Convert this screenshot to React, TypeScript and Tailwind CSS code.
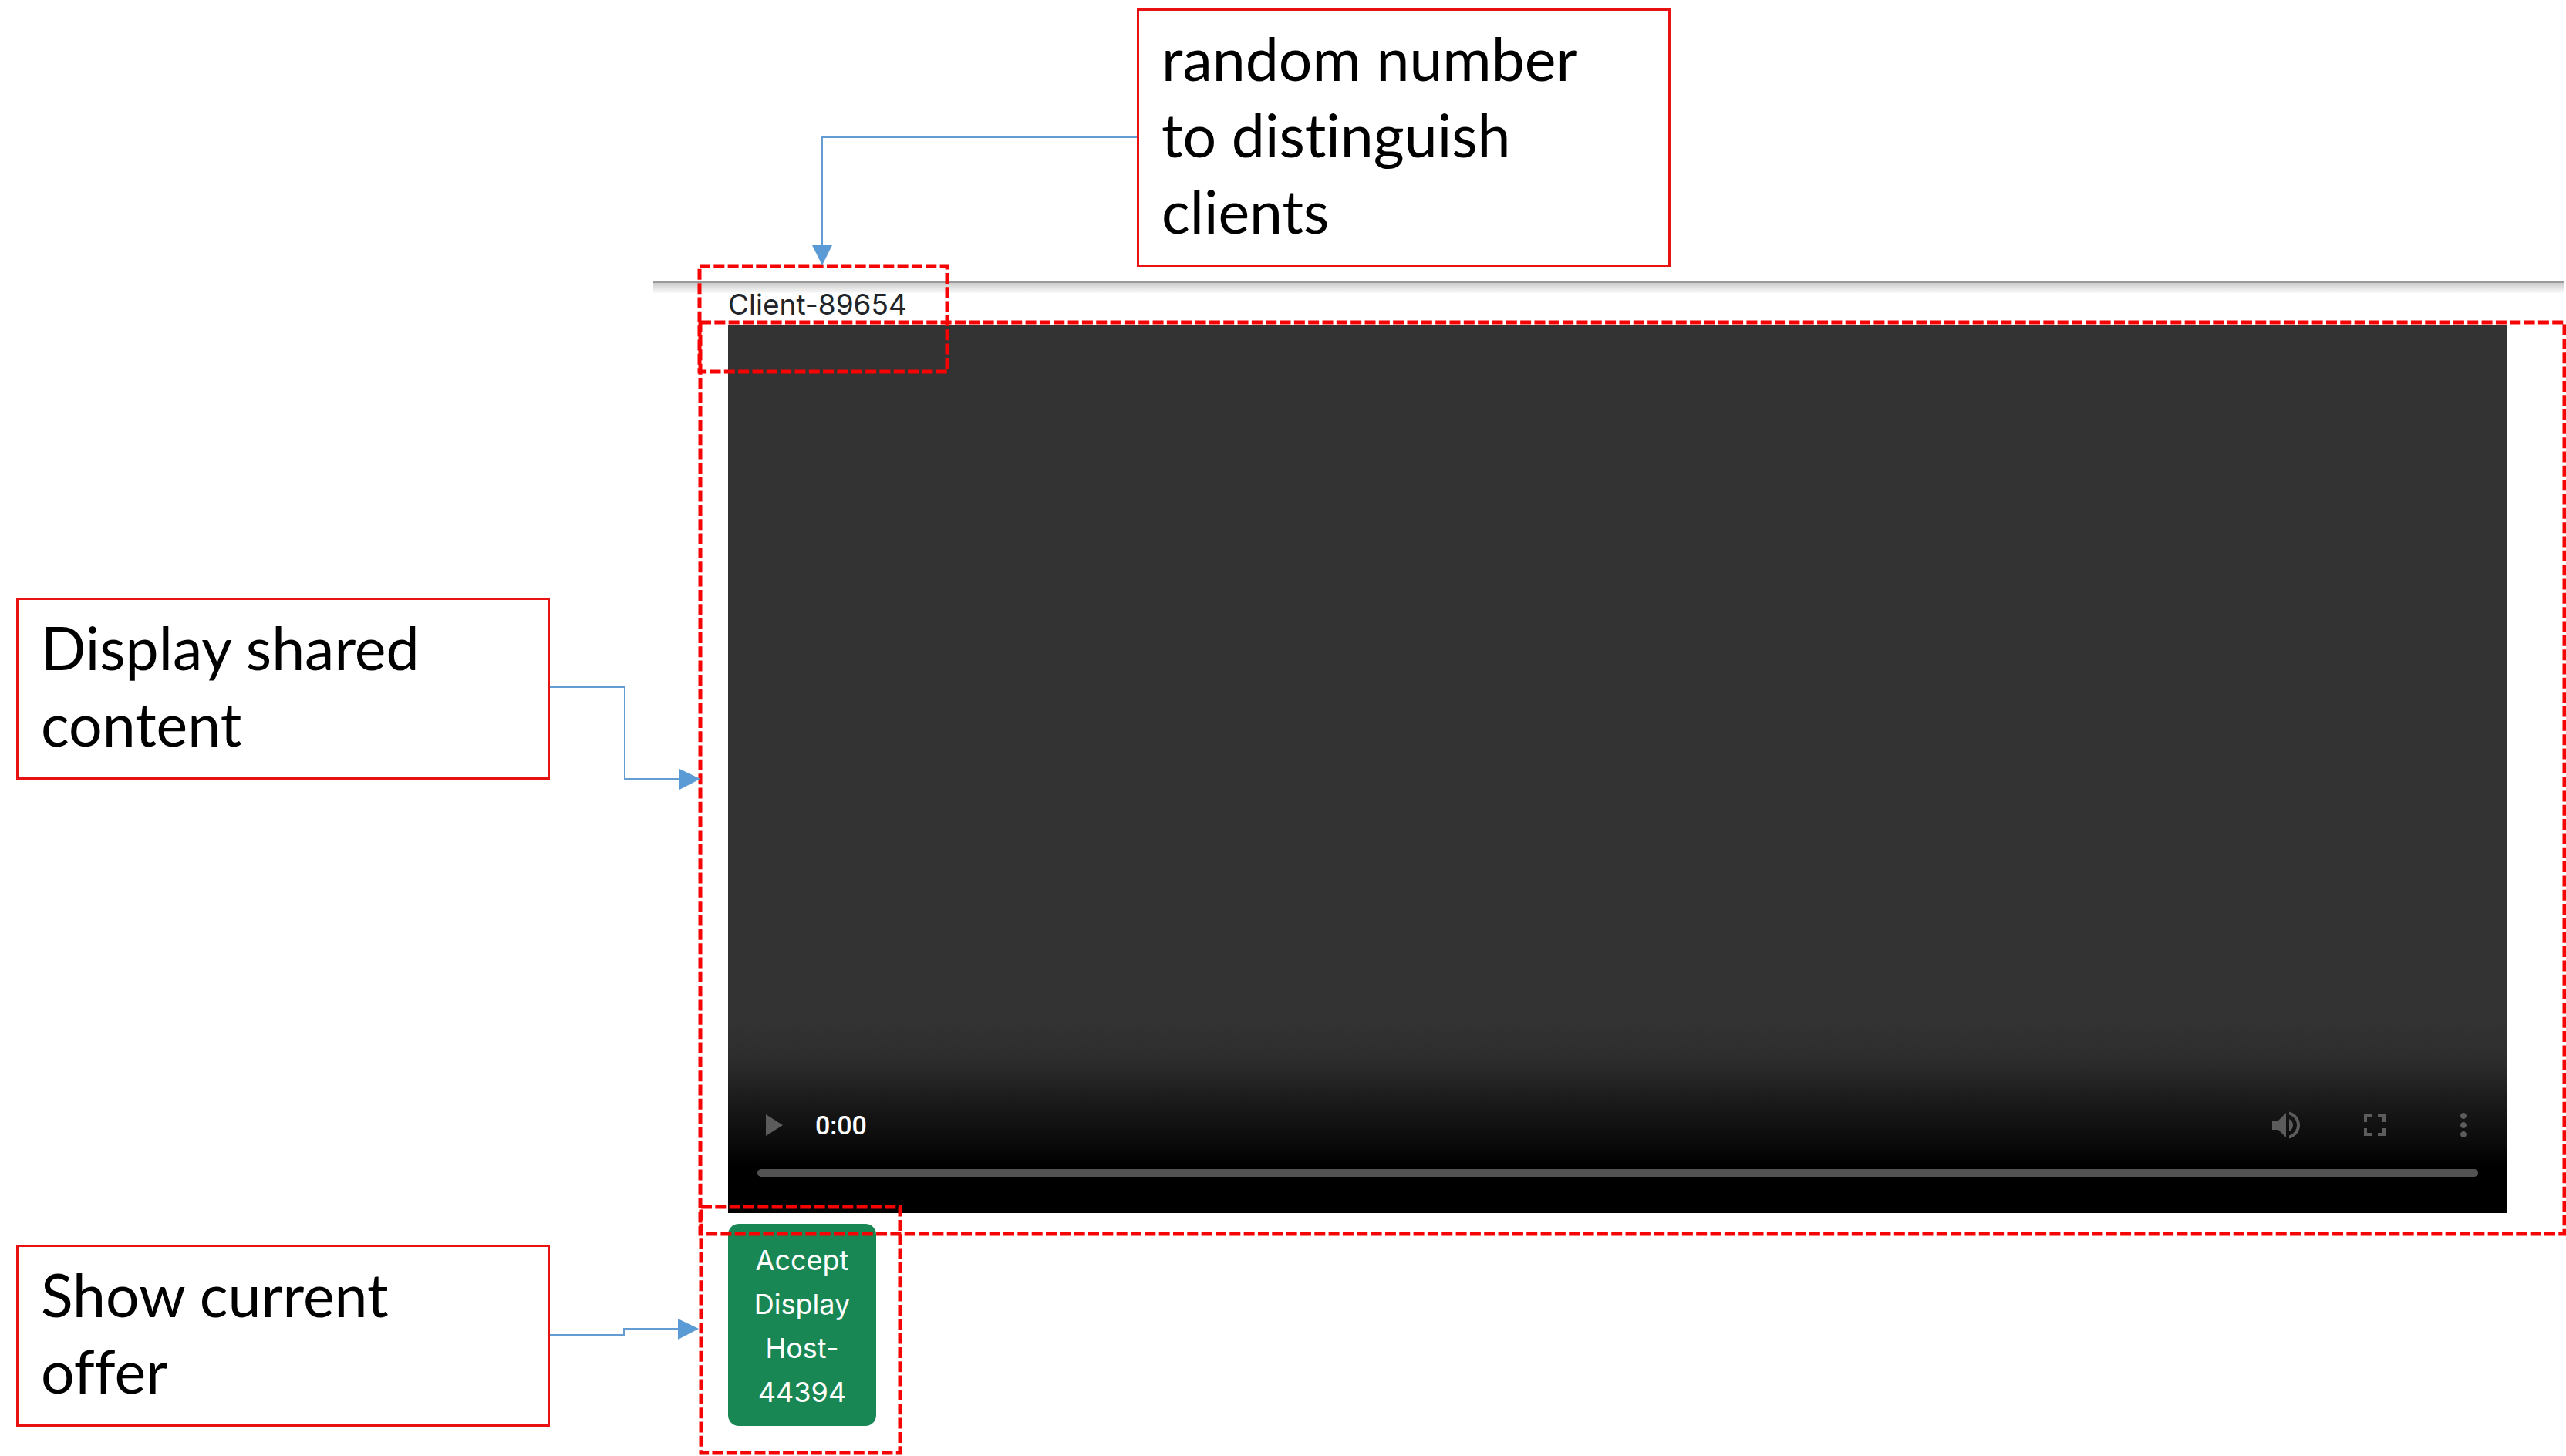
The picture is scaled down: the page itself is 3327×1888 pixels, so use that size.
import type { ReactNode } from "react";

function DashedFrame({ className }: { className: string }) {
  return (
    <svg className={`pointer-events-none absolute overflow-visible ${className}`} aria-hidden="true">
      <rect width="100%" height="100%" fill="none" stroke="#f60404" strokeWidth="5" strokeDasharray="14 4.33" />
    </svg>
  );
}

function Callout({ className, children }: { className: string; children: ReactNode }) {
  return (
    <p
      className={`absolute w-[692px] border-3 border-[#e81212] bg-white pt-[12px] pr-[100px] pb-[20px] pl-[29px] font-[Lato,sans-serif] text-[77px] leading-[99px] text-black [font-variant-ligatures:none] ${className}`}
    >
      {children}
    </p>
  );
}

function Icon({ d }: { d: string }) {
  return (
    <svg className="size-12" viewBox="0 0 24 24" fill="currentColor" aria-hidden="true">
      <path d={d} />
    </svg>
  );
}

function Player() {
  return (
    <section
      aria-label="Shared display"
      className="flex h-[1151px] flex-col justify-end bg-[#333333] bg-[linear-gradient(to_top,#000_0px,#000_60px,#0a0a0a_90px,#1c1c1c_150px,#2c2c2c_195px,#333_250px)] px-[38px] pb-[47px]"
    >
      <div className="flex h-12 items-center text-[#5c5c5c]">
        <button type="button" aria-label="Play" className="-ml-[5px]">
          <Icon d="M8 5v14l11-7z" />
        </button>
        <span className="ml-8 font-[Roboto,sans-serif] text-[34px] font-medium leading-12 text-white">0:00</span>
        <div className="-mr-[5px] ml-auto flex gap-[67px]">
          <button type="button" aria-label="Mute">
            <Icon d="M3 9v6h4l5 5V4L7 9H3zm13.5 3c0-1.77-1.02-3.29-2.5-4.03v8.05c1.48-.73 2.5-2.25 2.5-4.02zM14 3.23v2.06c2.89.86 5 3.54 5 6.71s-2.11 5.85-5 6.71v2.06c4.01-.91 7-4.49 7-8.77s-2.99-7.86-7-8.77z" />
          </button>
          <button type="button" aria-label="Full screen">
            <Icon d="M7 14H5v5h5v-2H7v-3zm-2-4h2V7h3V5H5v5zm12 7h-3v2h5v-5h-2v3zM14 5v2h3v3h2V5h-5z" />
          </button>
          <button type="button" aria-label="More options">
            <Icon d="M12 8c1.1 0 2-.9 2-2s-.9-2-2-2-2 .9-2 2 .9 2 2 2zm0 2c-1.100 0-2 .9-2 2s.9 2 2 2 2-.9 2-2-.9-2-2-2zm0 6c-1.100 0-2 .9-2 2s.9 2 2 2 2-.9 2-2-.9-2-2-2z" />
          </button>
        </div>
      </div>
      <input
        type="range"
        aria-label="Seek"
        defaultValue={0}
        className="mt-[33px] block h-[10px] w-full appearance-none rounded-full bg-[#525252] [&::-webkit-slider-thumb]:appearance-none [&::-webkit-slider-thumb]:opacity-0"
      />
    </section>
  );
}

function Connectors() {
  return (
    <svg className="pointer-events-none absolute left-0 top-0 h-full w-full" aria-hidden="true">
      <g fill="none" stroke="#649dd4" strokeWidth="2">
        <path d="M1474 178H1066V320" />
        <path d="M713 891H810V1010H884" />
        <path d="M713 1731H809V1723H882" />
      </g>
      <g fill="#5b9bd5">
        <path d="M1053 318H1079L1066 344Z" />
        <path d="M881 997V1024L908 1010Z" />
        <path d="M879 1710V1737L906 1723Z" />
      </g>
    </svg>
  );
}

export default function App() {
  return (
    <div className="relative min-h-screen overflow-hidden bg-white pl-[847px] pt-[365px] font-[Inter,sans-serif]">
      <main className="relative mr-[2px] pl-[97px] pr-[74px]">
        <div className="absolute inset-x-0 top-0 h-4 border-t-2 border-[#9a9a9a] bg-linear-to-b from-[#cccccc] to-white" />
        <h1 className="relative h-[57px] text-[37px] leading-[59px] text-[#212529]">Client-89654</h1>
        <Player />
        <button
          type="button"
          className="mt-[14px] block w-[192px] rounded-[14px] bg-[#198754] px-[30px] pt-[19px] pb-[15px] text-center text-[36px] leading-[57px] text-white"
        >
          Accept Display Host-44394
        </button>
        <DashedFrame className="-top-[20px] left-[60px] h-[137px] w-[321px]" />
        <DashedFrame className="left-[61px] top-[53px] h-[1182px] w-[calc(100%-61px)]" />
        <DashedFrame className="left-[62px] top-[1200px] h-[319px] w-[258px]" />
      </main>
      <Callout className="left-[1474px] top-[11px]">random number to distinguish clients</Callout>
      <Callout className="left-[21px] top-[775px]">Display shared content</Callout>
      <Callout className="left-[21px] top-[1614px]">Show current offer</Callout>
      <Connectors />
    </div>
  );
}
